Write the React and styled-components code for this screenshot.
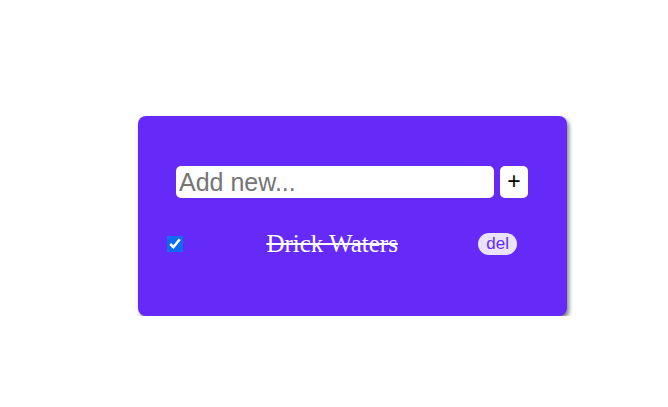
import React, { useState } from "react";
import styled, { createGlobalStyle } from "styled-components";

const Global = createGlobalStyle`
  html, body { margin: 0; padding: 0; background: #ffffff; }
  body { font-family: "Liberation Serif", "Times New Roman", serif; }
`;

const Page = styled.div`
  padding: 116px 0 0 138px;
`;

const Card = styled.div`
  box-sizing: border-box;
  width: 429px;
  height: 200px;
  background: #662af8;
  border-radius: 8px;
  box-shadow: 2px 3px 4px rgba(0, 0, 0, 0.5);
  padding: 50px 0 0 0;
  display: flex;
  flex-direction: column;
  align-items: stretch;
`;

const Form = styled.form`
  display: flex;
  gap: 6px;
  margin: 0 39px 0 38px;
  height: 32px;
`;

const Input = styled.input`
  box-sizing: border-box;
  flex: 1 1 auto;
  min-width: 0;
  width: 0;
  height: 32px;
  border: none;
  border-radius: 5px;
  padding: 0 3px;
  font-family: "Liberation Sans", Arial, sans-serif;
  font-size: 25px;
  color: #000;
  outline: none;
  &::placeholder { color: #757575; }
`;

const AddButton = styled.button`
  box-sizing: border-box;
  flex: 0 0 28px;
  width: 28px;
  height: 32px;
  border: none;
  border-radius: 5px;
  background: #ffffff;
  color: #000;
  font-family: "Liberation Sans", Arial, sans-serif;
  font-size: 23px;
  line-height: 1;
  padding: 0 0 2px 0;
  cursor: pointer;
`;

const List = styled.ul`
  list-style: none;
  margin: 33px 50px 0 25px;
  padding: 0;
`;

const Item = styled.li`
  display: flex;
  align-items: center;
  justify-content: space-between;
  height: 26px;
`;

const Check = styled.input`
  width: 16px;
  height: 16px;
  margin: 0 3px 0 4px;
  accent-color: #0b6cf2;
`;

const Label = styled.span`
  font-family: "Liberation Serif", "Times New Roman", serif;
  font-size: 25px;
  color: #ffffff;
  text-decoration: ${(p) => (p.$done ? "line-through" : "none")};
  line-height: 26px;
`;

const DelButton = styled.button`
  box-sizing: border-box;
  height: 22px;
  padding: 0 8px;
  border: none;
  border-radius: 11px;
  background: #ebe3fe;
  color: #662af8;
  font-family: "Liberation Sans", Arial, sans-serif;
  font-size: 17px;
  line-height: 22px;
  cursor: pointer;
`;

export default function App() {
  const [items, setItems] = useState([{ id: 1, text: "Drick Waters", done: true }]);
  const [value, setValue] = useState("");
  return (
    <Page>
      <Global />
      <Card>
        <Form
          onSubmit={(e) => {
            e.preventDefault();
            if (!value.trim()) return;
            setItems([...items, { id: Date.now(), text: value, done: false }]);
            setValue("");
          }}
        >
          <Input placeholder="Add new..." value={value} onChange={(e) => setValue(e.target.value)} />
          <AddButton type="submit">+</AddButton>
        </Form>
        <List>
          {items.map((it) => (
            <Item key={it.id}>
              <Check
                type="checkbox"
                checked={it.done}
                onChange={() =>
                  setItems(items.map((x) => (x.id === it.id ? { ...x, done: !x.done } : x)))
                }
              />
              <Label $done={it.done}>{it.text}</Label>
              <DelButton onClick={() => setItems(items.filter((x) => x.id !== it.id))}>del</DelButton>
            </Item>
          ))}
        </List>
      </Card>
    </Page>
  );
}
